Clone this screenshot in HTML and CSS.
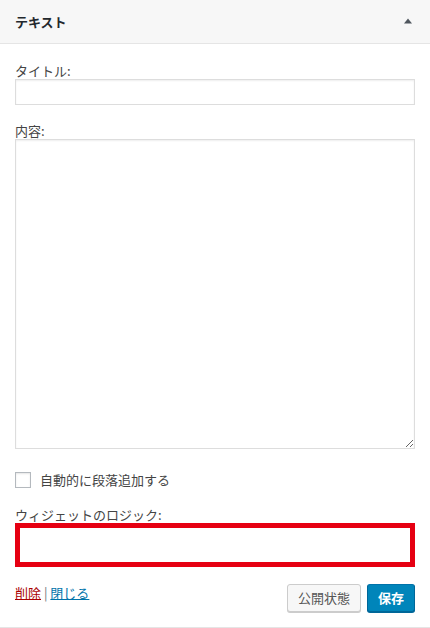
FILE: index.html
```html
<!DOCTYPE html>
<html lang="ja">
<head>
  <meta charset="UTF-8" />
  <meta name="viewport" content="width=device-width, initial-scale=1.0" />
  <title>テキスト ウィジェット</title>
  <link rel="stylesheet" href="styles.css">
</head>
<body>

  <div class="widget">
    <div class="widget-top">
      <h3 class="widget-title">テキスト</h3>
      <svg class="toggle" width="10" height="8" viewBox="0 0 10 8">
        <polygon points="5,1.5 9,6.5 1,6.5" fill="#50575e" />
      </svg>
    </div>

    <div class="widget-inside">
      <p class="field">
        <label for="title">タイトル:</label>
        <input type="text" id="title" class="text-input" />
      </p>

      <p class="field">
        <label for="content">内容:</label>
        <textarea id="content" class="text-area"></textarea>
      </p>

      <p class="check-row">
        <input type="checkbox" id="filter" class="check" />
        <label for="filter">自動的に段落追加する</label>
      </p>

      <p class="field logic">
        <label for="logic">ウィジェットのロジック:</label>
        <input type="text" id="logic" class="text-input highlight" />
      </p>

      <div class="widget-control">
        <div class="links">
          <a href="#" class="delete">削除</a> | <a href="#" class="close">閉じる</a>
        </div>
        <div class="actions">
          <button class="button">公開状態</button>
          <button class="button primary">保存</button>
        </div>
      </div>
    </div>
  </div>

</body>
</html>
```

FILE: styles.css
```css
body {
  margin: 0;
  background: #fff;
  color: #444;
  font-family: "Noto Sans CJK JP", "Liberation Sans", sans-serif;
  font-size: 13px;
}

.widget {
  border-bottom: 1px solid #e5e5e5;
}

.widget-top {
  height: 43px;
  background: #f7f7f7;
  border-bottom: 1px solid #e5e5e5;
  display: flex;
  align-items: center;
  justify-content: space-between;
  padding: 0 17px 0 15px;
}

.widget-title {
  margin: 0;
  font-size: 13px;
  font-weight: 600;
  color: #23282d;
}

.toggle {
  display: block;
  margin-top: -2px;
}

.widget-inside {
  padding: 18px 15px 15px;
}

.field {
  margin: 0;
}

.field + .field {
  margin-top: 17px;
}

.field label {
  display: block;
  line-height: 17px;
}

.text-input,
.text-area {
  display: block;
  box-sizing: border-box;
  width: 100%;
  margin: 0;
  border: 1px solid #ddd;
  box-shadow: inset 0 1px 2px rgba(0, 0, 0, 0.07);
  background: #fff;
  font: inherit;
}

.text-input {
  height: 26px;
}

.text-area {
  height: 310px;
  resize: vertical;
}

.check-row {
  margin: 22px 0 0;
  display: flex;
  align-items: center;
  gap: 9px;
  height: 17px;
}

.check {
  appearance: none;
  box-sizing: border-box;
  width: 16px;
  height: 16px;
  margin: 0;
  border: 1px solid #b4b9be;
  background: #fff;
  box-shadow: inset 0 1px 2px rgba(0, 0, 0, 0.1);
}

.check-row label {
  font-size: 13px;
  color: #444;
}

.field.logic {
  margin-top: 18px;
}

.text-input.highlight {
  height: 44px;
  border: 5px solid #e60012;
  box-shadow: none;
}

.widget-control {
  margin-top: 17px;
  display: flex;
  justify-content: space-between;
  align-items: flex-start;
}

.links {
  line-height: 17px;
  color: #72777c;
}

.links a {
  text-decoration: underline;
}

.delete { color: #a00; }
.close { color: #0073aa; }

.actions {
  display: flex;
  gap: 6px;
}

.button {
  box-sizing: border-box;
  height: 28px;
  padding: 0 10px;
  border: 1px solid #ccc;
  border-radius: 3px;
  background: #f7f7f7;
  box-shadow: 0 1px 0 #ccc;
  color: #555;
  font: inherit;
  font-size: 13px;
  line-height: 26px;
}

.button.primary {
  background: #0085ba;
  border-color: #0073aa #006799 #006799;
  box-shadow: 0 1px 0 #006799;
  color: #fff;
  font-weight: 600;
}
```
